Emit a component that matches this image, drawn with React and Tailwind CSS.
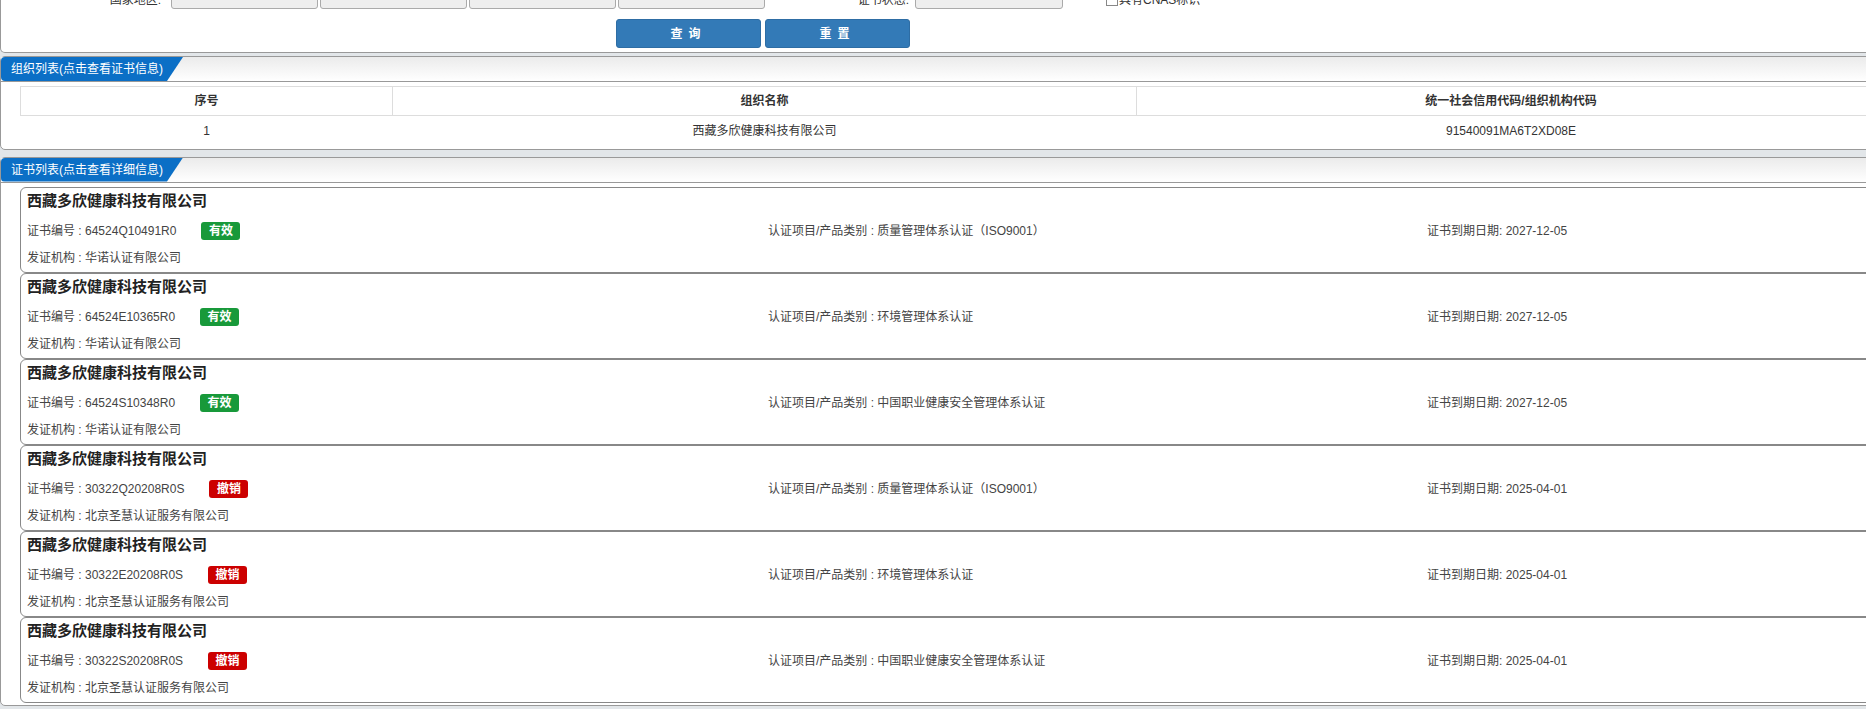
const certs = [
  { no: "64524Q10491R0", ok: true, item: "质量管理体系认证（ISO9001）", date: "2027-12-05", org: "华诺认证有限公司" },
  { no: "64524E10365R0", ok: true, item: "环境管理体系认证", date: "2027-12-05", org: "华诺认证有限公司" },
  { no: "64524S10348R0", ok: true, item: "中国职业健康安全管理体系认证", date: "2027-12-05", org: "华诺认证有限公司" },
  { no: "30322Q20208R0S", ok: false, item: "质量管理体系认证（ISO9001）", date: "2025-04-01", org: "北京圣慧认证服务有限公司" },
  { no: "30322E20208R0S", ok: false, item: "环境管理体系认证", date: "2025-04-01", org: "北京圣慧认证服务有限公司" },
  { no: "30322S20208R0S", ok: false, item: "中国职业健康安全管理体系认证", date: "2025-04-01", org: "北京圣慧认证服务有限公司" },
];

function PanelHeader({ title }) {
  return (
    <div className="flex h-[25px] border-b border-[#999] bg-gradient-to-b from-[#ebebeb] to-white">
      <div className="flex h-[24px] w-[182px] items-center rounded-l-[4px] bg-[#0b6fc6] pl-[10px] text-[12px] text-white [clip-path:polygon(0_0,182px_0,166px_100%,0_100%)]">
        {title}
      </div>
    </div>
  );
}

function Input({ className = "" }) {
  return <div className={"h-[28px] rounded-b-[3px] border border-[#aaa] bg-[#eeeeee] " + className} />;
}

function CertCard({ c }) {
  return (
    <div className="rounded-[6px] border border-[#888] bg-white pl-[6px] pt-[3px] pb-[6px] text-[12px] text-[#444]">
      <div className="text-[15px] font-bold leading-[20px] text-[#222]">西藏多欣健康科技有限公司</div>
      <div className="mt-[11px] flex h-[18px] items-center">
        <div className="flex w-[741px] items-center">
          <span>证书编号 : {c.no}</span>
          <span
            className={
              "ml-[25px] flex h-[18px] w-[39px] items-center justify-center rounded-[3px] font-bold text-white " +
              (c.ok ? "bg-[#18993a]" : "bg-[#cc0000]")
            }
          >
            {c.ok ? "有效" : "撤销"}
          </span>
        </div>
        <div className="w-[659px]">认证项目/产品类别 : {c.item}</div>
        <div>证书到期日期: {c.date}</div>
      </div>
      <div className="mt-[10px] leading-[16px]">发证机构 : {c.org}</div>
    </div>
  );
}

export default function App() {
  return (
    <div
      className="h-[709px] w-full overflow-hidden bg-[#e2e6e9] text-[#333]"
      style={{ fontFamily: '"Liberation Sans", Arial, "Noto Sans CJK SC", sans-serif' }}
    >
      {/* search panel (top part scrolled away) */}
      <div className="w-[1910px] rounded-b-[5px] border-x border-b border-[#999] bg-white pb-[4px]">
        <div className="-mt-[19px] flex h-[28px] items-center text-[12px]">
          <div className="w-[160px] pt-[10px] text-right">国家地区:</div>
          <Input className="ml-[10px] w-[147px]" />
          <Input className="ml-[2px] w-[147px]" />
          <Input className="ml-[2px] w-[147px]" />
          <Input className="ml-[2px] w-[147px]" />
          <div className="w-[144px] pt-[10px] text-right">证书状态:</div>
          <Input className="ml-[6px] w-[148px]" />
          <div className="ml-[43px] flex items-center pt-[10px]">
            <span className="h-[12px] w-[12px] border border-[#888] bg-white" />
            <span className="ml-[1px]">具有CNAS标识</span>
          </div>
        </div>
        <div className="ml-[615px] mt-[10px] flex gap-[4px]">
          <button className="h-[29px] w-[145px] rounded-[3px] border border-[#2e6da4] bg-[#337ab7] text-[12px] font-bold tracking-[6px] text-white">
            查询
          </button>
          <button className="h-[29px] w-[145px] rounded-[3px] border border-[#2e6da4] bg-[#337ab7] text-[12px] font-bold tracking-[6px] text-white">
            重置
          </button>
        </div>
      </div>

      {/* organisation list */}
      <div className="mt-[3px] w-[1910px] rounded-[5px] border border-[#999] bg-white pb-[3px]">
        <PanelHeader title="组织列表(点击查看证书信息)" />
        <table className="ml-[19px] mt-[4px] w-[1866px] table-fixed border-collapse text-[12px]">
          <thead>
            <tr className="h-[29px]">
              <th className="w-[372px] border border-[#ddd] font-bold">序号</th>
              <th className="w-[744px] border border-[#ddd] font-bold">组织名称</th>
              <th className="border border-[#ddd] font-bold">统一社会信用代码/组织机构代码</th>
            </tr>
          </thead>
          <tbody>
            <tr className="h-[30px] text-center">
              <td>1</td>
              <td>西藏多欣健康科技有限公司</td>
              <td>91540091MA6T2XD08E</td>
            </tr>
          </tbody>
        </table>
      </div>

      {/* certificate list */}
      <div className="mt-[7px] w-[1910px] rounded-[5px] border border-[#999] bg-white pb-[2px]">
        <PanelHeader title="证书列表(点击查看详细信息)" />
        <div className="ml-[19px] mt-[4px] flex w-[1866px] flex-col">
          {certs.map((c) => (
            <CertCard key={c.no} c={c} />
          ))}
        </div>
      </div>
    </div>
  );
}
